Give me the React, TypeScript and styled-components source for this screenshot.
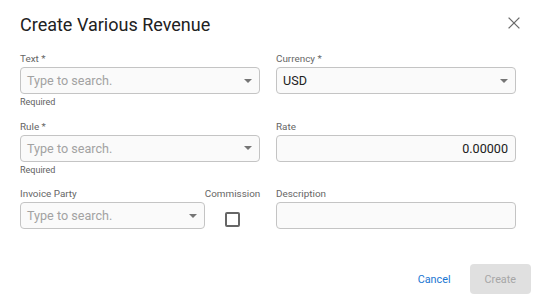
import styled, { createGlobalStyle } from "styled-components";

const GlobalStyle = createGlobalStyle`
  * {
    box-sizing: border-box;
  }

  body {
    margin: 0;
    background: #ffffff;
    font-family: Roboto, "Liberation Sans", sans-serif;
  }
`;

const Dialog = styled.div`
  width: 538px;
  height: 301px;
  background: #ffffff;
  display: flex;
  flex-direction: column;
`;

const Header = styled.div`
  display: flex;
  justify-content: space-between;
  align-items: flex-start;
  padding: 13px 12px 0 20px;
  height: 37px;
  margin-bottom: 14px;
`;

const Title = styled.h2`
  margin: 0;
  font-size: 18px;
  line-height: 24px;
  font-weight: 400;
  color: #212121;
`;

const CloseButton = styled.button`
  width: 24px;
  height: 24px;
  margin-top: -2.5px;
  padding: 0;
  border: none;
  background: transparent;
  display: flex;
  align-items: center;
  justify-content: center;
  cursor: pointer;
`;

const Form = styled.div`
  display: grid;
  grid-template-columns: 240px 240px;
  column-gap: 16px;
  row-gap: 10.5px;
  padding: 0 22px 0 20px;
`;

const Field = styled.div`
  display: flex;
  flex-direction: column;
`;

const Label = styled.label<{ $center?: boolean }>`
  font-size: 9.9px;
  line-height: 13px;
  height: 13px;
  padding-top: 1px;
  color: #666666;
  margin-bottom: 3px;
  white-space: nowrap;
  text-align: ${({ $center }) => ($center ? "center" : "left")};
`;

const InputBox = styled.div<{ $right?: boolean }>`
  height: 27px;
  border: 1px solid #c4c4c4;
  border-radius: 4px;
  background: #fafafa;
  display: flex;
  align-items: center;
  justify-content: ${({ $right }) => ($right ? "flex-end" : "space-between")};
  padding: 0 7px 0 6px;
  font-size: 12.6px;
  color: #212121;
`;

const Placeholder = styled.span`
  color: #a2a2a2;
`;

const Value = styled.span`
  color: #212121;
`;

const Helper = styled.div`
  font-size: 9px;
  line-height: 11px;
  margin-top: 3px;
  color: #616161;
`;

const Split = styled.div`
  display: grid;
  grid-template-columns: 185px 55px;
`;

const CheckCell = styled.div`
  display: flex;
  flex-direction: column;
  align-items: center;
`;

const Checkbox = styled.span`
  width: 15px;
  height: 15px;
  margin-top: 10px;
  border: 2px solid #666666;
  border-radius: 2px;
`;

const Footer = styled.div`
  display: flex;
  justify-content: flex-end;
  align-items: center;
  gap: 11px;
  margin-top: 35px;
  padding-right: 7px;
`;

const Button = styled.button<{ $variant: "text" | "disabled" }>`
  height: 30px;
  border: none;
  border-radius: 4px;
  font-family: Roboto, "Liberation Sans", sans-serif;
  font-size: 10.8px;
  padding: 0 ${({ $variant }) => ($variant === "text" ? "8px" : "15px")};
  color: ${({ $variant }) => ($variant === "text" ? "#1976d2" : "#a6a6a6")};
  background: ${({ $variant }) => ($variant === "text" ? "transparent" : "#e0e0e0")};
  min-width: ${({ $variant }) => ($variant === "text" ? "0" : "61px")};
`;

const Caret = () => (
  <svg width="8" height="4" viewBox="0 0 8 4">
    <path d="M0 0h8L4 4z" fill="#757575" />
  </svg>
);

const SearchSelect = () => (
  <InputBox>
    <Placeholder>Type to search.</Placeholder>
    <Caret />
  </InputBox>
);

const App = () => {
  return (
    <>
      <GlobalStyle />
      <Dialog>
        <Header>
          <Title>Create Various Revenue</Title>
          <CloseButton aria-label="close">
            <svg width="12" height="12" viewBox="0 0 12 12">
              <path d="M0.6 0.6L11.4 11.4M11.4 0.6L0.6 11.4" stroke="#6b6b6b" strokeWidth="1.3" />
            </svg>
          </CloseButton>
        </Header>

        <Form>
          <Field>
            <Label>Text *</Label>
            <SearchSelect />
            <Helper>Required</Helper>
          </Field>
          <Field>
            <Label>Currency *</Label>
            <InputBox>
              <Value>USD</Value>
              <Caret />
            </InputBox>
          </Field>

          <Field>
            <Label>Rule *</Label>
            <SearchSelect />
            <Helper>Required</Helper>
          </Field>
          <Field>
            <Label>Rate</Label>
            <InputBox $right>
              <Value>0.00000</Value>
            </InputBox>
          </Field>

          <Split>
            <Field>
              <Label>Invoice Party</Label>
              <SearchSelect />
            </Field>
            <CheckCell>
              <Label $center>Commission</Label>
              <Checkbox />
            </CheckCell>
          </Split>
          <Field>
            <Label>Description</Label>
            <InputBox />
          </Field>
        </Form>

        <Footer>
          <Button $variant="text">Cancel</Button>
          <Button $variant="disabled" disabled>
            Create
          </Button>
        </Footer>
      </Dialog>
    </>
  );
};

export default App;
